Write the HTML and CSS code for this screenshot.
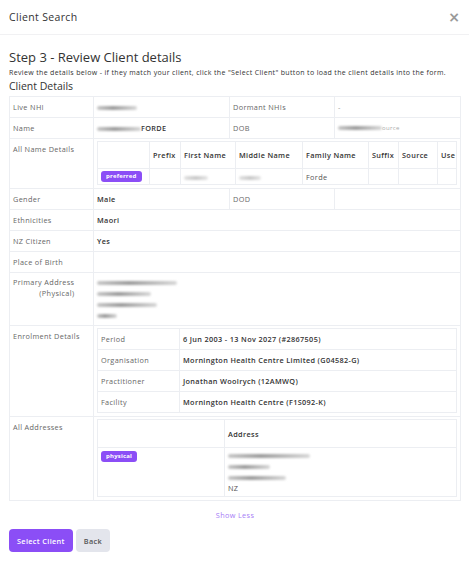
FILE: index.html
```html
<!DOCTYPE html>
<html lang="en">
<head>
  <meta charset="UTF-8">
  <meta name="viewport" content="width=device-width, initial-scale=1.0">
  <title>Client Search</title>
  <link rel="stylesheet" href="styles.css">
</head>
<body>

  <div class="modal">
    <div class="modal-header">
      <span class="modal-title">Client Search</span>
      <button class="close" type="button">&times;</button>
    </div>

    <div class="modal-body">
      <h2 class="step-title">Step 3 - Review Client details</h2>
      <p class="hint">Review the details below - if they match your client, click the "Select Client" button to load the client details into the form.</p>
      <h3 class="section-title">Client Details</h3>

      <table class="details">
        <colgroup>
          <col class="col-label">
          <col class="col-value">
          <col class="col-label2">
          <col class="col-value2">
        </colgroup>
        <tr>
          <td class="label">Live NHI</td>
          <td><span class="redact w40"></span></td>
          <td class="label">Dormant NHIs</td>
          <td class="muted">-</td>
        </tr>
        <tr>
          <td class="label">Name</td>
          <td class="value"><span class="redact w44"></span>FORDE</td>
          <td class="label">DOB</td>
          <td class="small-muted"><span class="redact w44"></span>ource</td>
        </tr>
        <tr>
          <td class="label">All Name Details</td>
          <td colspan="3" class="nested-cell">
            <table class="nested names">
              <colgroup>
                <col class="n-use">
                <col class="n-prefix">
                <col class="n-first">
                <col class="n-middle">
                <col class="n-family">
                <col class="n-suffix">
                <col class="n-source">
                <col>
              </colgroup>
              <tr>
                <th></th>
                <th>Prefix</th>
                <th>First Name</th>
                <th>Middle Name</th>
                <th>Family Name</th>
                <th>Suffix</th>
                <th>Source</th>
                <th>Use</th>
              </tr>
              <tr class="name-row">
                <td><span class="badge">preferred</span></td>
                <td></td>
                <td><span class="redact w24 faint"></span></td>
                <td><span class="redact w22 faint"></span></td>
                <td>Forde</td>
                <td></td>
                <td></td>
                <td></td>
              </tr>
            </table>
          </td>
        </tr>
        <tr>
          <td class="label">Gender</td>
          <td class="value">Male</td>
          <td class="label">DOD</td>
          <td></td>
        </tr>
        <tr>
          <td class="label">Ethnicities</td>
          <td colspan="3" class="value">Maori</td>
        </tr>
        <tr>
          <td class="label">NZ Citizen</td>
          <td colspan="3" class="value">Yes</td>
        </tr>
        <tr>
          <td class="label">Place of Birth</td>
          <td colspan="3"></td>
        </tr>
        <tr>
          <td class="label lines"><span class="address-label">Primary Address<br>(Physical)</span></td>
          <td colspan="3" class="lines">
            <span class="redact w80"></span><br>
            <span class="redact w54"></span><br>
            <span class="redact w60"></span><br>
            <span class="redact w20"></span>
          </td>
        </tr>
        <tr>
          <td class="label">Enrolment Details</td>
          <td colspan="3" class="nested-cell">
            <table class="nested enrolment">
              <colgroup>
                <col class="e-label">
                <col>
              </colgroup>
              <tr>
                <td class="label">Period</td>
                <td class="value">6 Jun 2003 - 13 Nov 2027 (#2867505)</td>
              </tr>
              <tr>
                <td class="label">Organisation</td>
                <td class="value">Mornington Health Centre Limited (G04582-G)</td>
              </tr>
              <tr>
                <td class="label">Practitioner</td>
                <td class="value">Jonathan Woolrych (12AMWQ)</td>
              </tr>
              <tr>
                <td class="label">Facility</td>
                <td class="value">Mornington Health Centre (F1S092-K)</td>
              </tr>
            </table>
          </td>
        </tr>
        <tr>
          <td class="label">All Addresses</td>
          <td colspan="3" class="nested-cell">
            <table class="nested addresses">
              <colgroup>
                <col class="a-type">
                <col>
              </colgroup>
              <tr>
                <th></th>
                <th>Address</th>
              </tr>
              <tr>
                <td><span class="badge">physical</span></td>
                <td class="address-lines">
                  <span class="redact w82"></span><br>
                  <span class="redact w42"></span><br>
                  <span class="redact w58"></span><br>
                  NZ
                </td>
              </tr>
            </table>
          </td>
        </tr>
      </table>

      <div class="show-less"><a href="#">Show Less</a></div>

      <div class="actions">
        <button class="btn btn-primary" type="button">Select Client</button>
        <button class="btn btn-light" type="button">Back</button>
      </div>
    </div>
  </div>

</body>
</html>
```

FILE: styles.css
```css
body {
  margin: 0;
  font-family: 'Open Sans', 'Liberation Sans', sans-serif;
  letter-spacing: 0.35px;
  color: #333;
  background: #fff;
}

.modal-header {
  display: flex;
  justify-content: space-between;
  align-items: center;
  height: 34px;
  padding: 0 9px;
  border-bottom: 1px solid #f1f1f3;
}

.modal-title {
  font-size: 10.5px;
  color: #333;
}

.close {
  border: none;
  background: none;
  padding: 0;
  font-family: 'DejaVu Sans', sans-serif;
  font-size: 14px;
  font-weight: bold;
  color: #9a9a9a;
  cursor: pointer;
}

.modal-body {
  padding: 14px 8px 0 9px;
}

.step-title {
  margin: 0;
  font-size: 13px;
  line-height: 16px;
  font-weight: 400;
  letter-spacing: 0;
  color: #333;
}

.hint {
  margin: 3px 0 0;
  font-size: 7px;
  line-height: 10px;
  white-space: nowrap;
  color: #333;
}

.section-title {
  margin: 1px 0 3px;
  font-size: 10.5px;
  line-height: 14px;
  font-weight: 400;
  letter-spacing: 0;
  color: #333;
}

/* main details grid */
.details {
  width: 452px;
  border-collapse: collapse;
  table-layout: fixed;
  font-size: 7.3px;
}

.details td {
  border: 1px solid #eceef2;
  padding: 5px 3px;
  line-height: 10px;
  vertical-align: top;
}

.col-label { width: 84px; }
.col-value { width: 136px; }
.col-label2 { width: 105px; }

.label {
  color: #666;
}

.value {
  color: #333;
  font-weight: 600;
}

.muted {
  color: #999;
}

.small-muted {
  color: #aaa;
  font-size: 6px;
}

.address-label {
  display: inline-block;
  text-align: right;
}

.details td.lines {
  line-height: 11px;
  padding: 4px 3px;
}

.details td.nested-cell {
  padding: 2px 3px 3px;
}

/* tables inside a cell */
.nested {
  width: 100%;
  border-collapse: collapse;
  table-layout: fixed;
}

.nested th {
  border: 1px solid #eceef2;
  height: 26px;
  padding: 0 3px;
  line-height: 10px;
  text-align: left;
  font-weight: 600;
  color: #333;
}

.addresses th {
  height: 27px;
}

.details .nested td {
  padding: 3px;
  line-height: 10px;
  color: #555;
}

.details .name-row td {
  height: 16px;
  padding: 2px 3px;
  box-sizing: border-box;
  vertical-align: middle;
}

.details .nested td.address-lines {
  line-height: 11px;
  padding: 2px 3px;
}

.details .enrolment td {
  padding: 5px 3px;
}

.details .enrolment td.label {
  color: #666;
}

.details .enrolment td.value {
  color: #333;
}

.n-use { width: 52px; }
.n-prefix { width: 31px; }
.n-first { width: 55px; }
.n-middle { width: 67px; }
.n-family { width: 66px; }
.n-suffix { width: 30px; }
.n-source { width: 39px; }

.e-label { width: 82px; }

.a-type { width: 127px; }

.badge {
  display: inline-block;
  vertical-align: top;
  padding: 0 5px;
  height: 11px;
  line-height: 11px;
  border-radius: 3px;
  background: #8b4ef6;
  color: #fff;
  font-size: 6px;
  font-weight: 700;
  letter-spacing: 0.2px;
}

/* redacted values */
.redact {
  display: inline-block;
  height: 4px;
  vertical-align: middle;
  border-radius: 2px;
  background: linear-gradient(90deg, #c8c8c8, #9d9d9d 40%, #d8d8d8);
  filter: blur(1px);
}

.redact.faint {
  background: linear-gradient(90deg, #e2e2e2, #c9c9c9 50%, #e6e6e6);
}

.w20 { width: 20px; }
.w22 { width: 22px; }
.w24 { width: 24px; }
.w40 { width: 40px; }
.w42 { width: 42px; }
.w44 { width: 44px; }
.w54 { width: 54px; }
.w58 { width: 58px; }
.w60 { width: 60px; }
.w80 { width: 80px; }
.w82 { width: 82px; }

.show-less {
  text-align: center;
  margin-top: 8px;
  font-size: 7.3px;
  line-height: 12px;
}

.show-less a {
  color: #a67cf6;
  text-decoration: none;
}

.actions {
  display: flex;
  gap: 3px;
  margin-top: 8px;
}

.btn {
  height: 23px;
  padding: 0 8px;
  border: none;
  border-radius: 4px;
  font-family: inherit;
  font-size: 7.3px;
  font-weight: 600;
  letter-spacing: 0.35px;
  cursor: pointer;
}

.btn-primary {
  background: #8b4ef6;
  color: #fff;
}

.btn-light {
  background: #e3e5ec;
  color: #555;
}
```
